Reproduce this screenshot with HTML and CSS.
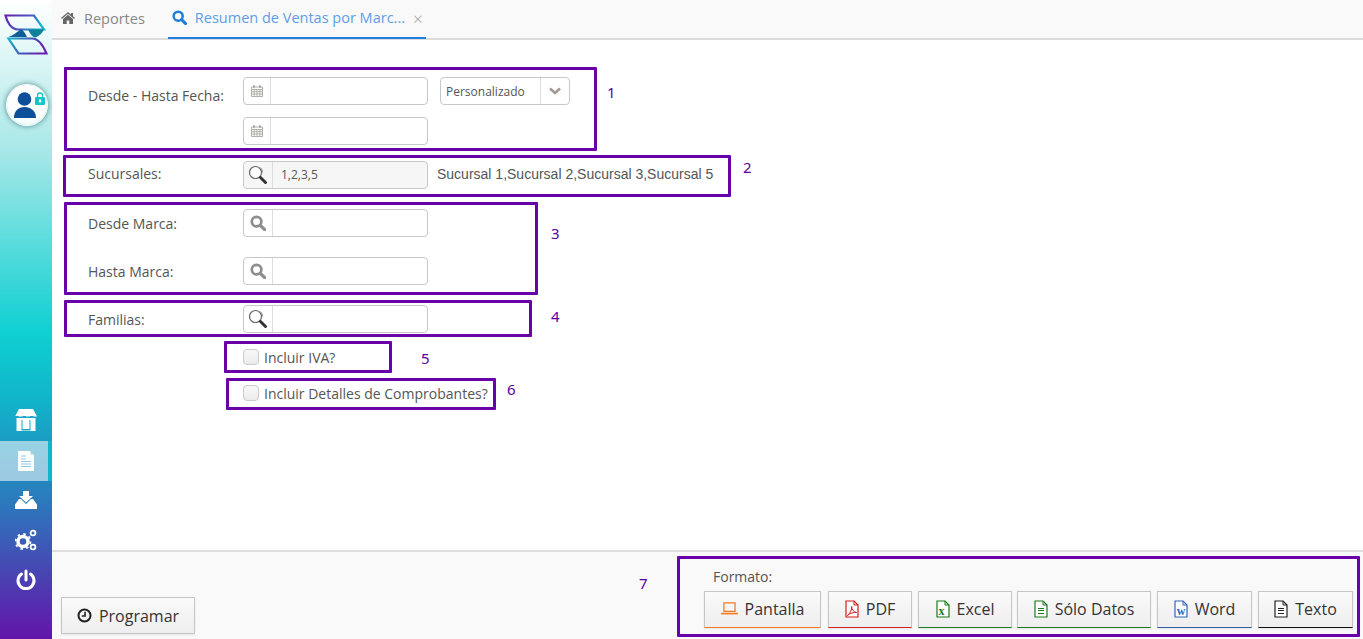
FILE: index.html
```html
<!DOCTYPE html>
<html lang="es">
<head>
<meta charset="utf-8">
<title>Resumen de Ventas por Marca</title>
<link rel="stylesheet" href="styles.css">
</head>
<body>
<svg class="defs" width="0" height="0" aria-hidden="true">
  <defs>
    <linearGradient id="lgTop" x1="0" y1="0" x2="1" y2="0.3"><stop offset="0" stop-color="#6a1fb0"/><stop offset=".6" stop-color="#4a55c0"/><stop offset="1" stop-color="#16b5c8"/></linearGradient>
    <linearGradient id="lgBot" x1="0" y1="0" x2="1" y2="0.3"><stop offset="0" stop-color="#16b5c8"/><stop offset=".5" stop-color="#3a62bd"/><stop offset="1" stop-color="#6a1fb0"/></linearGradient>
    <symbol id="i-cal" viewBox="0 0 14 14"><path fill="none" stroke="#b4b0a8" stroke-width="1" d="M1.500 3h11v9.500h-11zM1.500 5.500h11M1.500 7.700h11M1.500 10h11M4.200 5.500v7M7 5.500v7M9.800 5.500v7"/><path stroke="#a09c94" stroke-width="1.600" d="M4 1.200v2.600M10 1.200v2.600"/></symbol>
    <symbol id="i-search" viewBox="0 0 16 16"><circle cx="6.600" cy="6.600" r="4.800" fill="none" stroke="currentColor" stroke-width="2.700"/><path d="M10.300 10.300l4.200 4.200" stroke="currentColor" stroke-width="3.200" stroke-linecap="round"/></symbol>
    <symbol id="i-lookup" viewBox="0 0 20 20"><circle cx="7.500" cy="7.500" r="6" fill="#fff" stroke="#666" stroke-width="1.200"/><path fill="none" stroke="#999" stroke-width="1" d="M10 2.500a4 4 0 0 1 4.500 5"/><path d="M12.500 12.500l5 5" stroke="#333" stroke-width="3" stroke-linecap="round"/></symbol>
    <symbol id="i-file" viewBox="0 0 14 18"><path fill="#fff" stroke="currentColor" stroke-width="1.200" d="M1 1h8l4 4v12H1z"/><path fill="none" stroke="currentColor" stroke-width="1" d="M9 1v4h4"/></symbol>
  </defs>
</svg>

<aside class="sidebar">
  <svg class="logo" viewBox="0 0 48 42" width="48" height="42" aria-hidden="true">
    <path fill="none" stroke="url(#lgTop)" stroke-width="2.200" d="M5.500 1.500h28.500L44 15.500H18C11 15.500 7 8 5.500 1.500z"/>
    <path fill="#0f5f96" d="M8 23c5-1 9-5 13-8 4 3 5 6 6 8z"/>
    <path fill="#0f7f9a" d="M28 15.500h16c-2 4-6 7.500-9 8-3-1-5-4-7-8z"/>
    <path fill="none" stroke="url(#lgBot)" stroke-width="2.200" d="M8.500 24.500h24c7 0 11 8 14 15H18.500z"/>
  </svg>
  <div class="avatar">
    <svg viewBox="0 0 40 40" width="40" height="40" aria-hidden="true">
      <circle cx="17.500" cy="14" r="6.800" fill="#0d4f98"/>
      <path fill="#0d4f98" d="M7 33c0-7 4-11 10.500-11S29 26 29 33z"/>
      <path fill="none" stroke="#17c4c4" stroke-width="1.300" d="M30.500 12V10.500a2.500 2.500 0 0 1 5 0V12"/>
      <rect x="28" y="12" width="10" height="8" rx="1" fill="#17c4c4"/>
      <rect x="32" y="14.500" width="2.200" height="3" fill="#fff"/>
    </svg>
  </div>
  <nav class="side-nav">
    <a class="side-item">
      <svg viewBox="0 0 22 23" width="22" height="23" aria-hidden="true"><path fill="#fff" d="M4 0h14l4 7.500H0z"/><path fill="#fff" d="M1.500 9h19v13h-19z"/><path fill="#1aa3c4" d="M6.500 11h9v10.500h-9z"/><path fill="#fff" d="M7.500 11h7v9h-7z"/><path fill="#1aa3c4" d="M0 7h3.600a1.800 1.800 0 0 1-3.600 0zM7.400 7h3.600a1.800 1.800 0 0 1-3.600 0zM14.800 7h3.600a1.800 1.800 0 0 1-3.600 0z"/></svg>
    </a>
    <a class="side-item is-active">
      <svg viewBox="0 0 16 20" width="16" height="20" aria-hidden="true"><path fill="#fff" d="M0 0h12l4 4v16H0z"/><path fill="#a9d4e4" d="M12.500 0l3.500 3.500h-3.500z"/><path stroke="#8ecbe2" stroke-width="1.200" d="M3 5h5M3 8h5M3 10.500h10M3 13h10M3 15.500h10"/></svg>
    </a>
    <a class="side-item side-after">
      <svg viewBox="0 0 22 18" width="22" height="18" aria-hidden="true"><path fill="#fff" d="M8 0h6v5h4l-7 6.500L4 5h4z"/><path fill="#fff" d="M4 8h2l5 5 5-5h2l4 5.500V18H0v-4.500z"/></svg>
    </a>
    <a class="side-item">
      <svg viewBox="0 0 22 22" width="22" height="22" aria-hidden="true"><circle cx="8" cy="12.500" r="5" fill="none" stroke="#fff" stroke-width="3.500"/><circle cx="8" cy="12.500" r="7.500" fill="none" stroke="#fff" stroke-width="1.800" stroke-dasharray="2.500 3.400"/><circle cx="18" cy="4" r="2.400" fill="none" stroke="#fff" stroke-width="1.800"/><circle cx="18" cy="18" r="2.400" fill="none" stroke="#fff" stroke-width="1.800"/></svg>
    </a>
    <a class="side-item">
      <svg viewBox="0 0 20 22" width="20" height="22" aria-hidden="true"><path fill="none" stroke="#fff" stroke-width="3" stroke-linecap="round" d="M5.500 5a8 8 0 1 0 9 0"/><path stroke="#fff" stroke-width="3" stroke-linecap="round" d="M10 2v9"/></svg>
    </a>
  </nav>
</aside>

<main class="main">
  <header class="tabs">
    <a class="tab">
      <svg class="tab-icon" viewBox="0 0 14 12" width="14" height="12" aria-hidden="true"><path fill="#666" d="M7 0l3 2.600V1h2v3.300L14 6l-.8 1L7 1.800.8 7 0 6zM2 7l5-4.200L12 7v5H8.300V8.500H5.700V12H2z"/></svg>
      <span>Reportes</span>
    </a>
    <a class="tab is-active">
      <svg class="tab-icon" width="15" height="15" aria-hidden="true"><use href="#i-search"/></svg>
      <span>Resumen de Ventas por Marc...</span>
      <span class="tab-close">×</span>
    </a>
  </header>

  <form class="form">
    <div class="row row-date">
      <label class="row-label">Desde - Hasta Fecha:</label>
      <div class="field"><span class="addon"><svg width="14" height="14" aria-hidden="true"><use href="#i-cal"/></svg></span><span class="value"></span></div>
      <div class="select"><span class="select-text">Personalizado</span><span class="select-arrow"><svg viewBox="0 0 12 8" width="12" height="8" aria-hidden="true"><path fill="none" stroke="#a09a90" stroke-width="2.600" d="M1 1.500l5 4.500 5-4.500"/></svg></span></div>
    </div>
    <div class="row row-date2">
      <span class="row-label"></span>
      <div class="field"><span class="addon"><svg width="14" height="14" aria-hidden="true"><use href="#i-cal"/></svg></span><span class="value"></span></div>
    </div>
    <div class="row row-suc">
      <label class="row-label">Sucursales:</label>
      <div class="field is-filled"><span class="addon addon-w"><svg width="20" height="20" aria-hidden="true"><use href="#i-lookup"/></svg></span><span class="value">1,2,3,5</span></div>
      <span class="desc">Sucursal 1,Sucursal 2,Sucursal 3,Sucursal 5</span>
    </div>
    <div class="row row-std">
      <label class="row-label">Desde Marca:</label>
      <div class="field"><span class="addon addon-w"><svg class="grey-ic" width="16" height="16" aria-hidden="true"><use href="#i-search"/></svg></span><span class="value"></span></div>
    </div>
    <div class="row row-std">
      <label class="row-label">Hasta Marca:</label>
      <div class="field"><span class="addon addon-w"><svg class="grey-ic" width="16" height="16" aria-hidden="true"><use href="#i-search"/></svg></span><span class="value"></span></div>
    </div>
    <div class="row row-std">
      <label class="row-label">Familias:</label>
      <div class="field"><span class="addon addon-w"><svg width="20" height="20" aria-hidden="true"><use href="#i-lookup"/></svg></span><span class="value"></span></div>
    </div>
    <label class="check check-iva"><span class="box"></span>Incluir IVA?</label>
    <label class="check check-det"><span class="box"></span>Incluir Detalles de Comprobantes?</label>
  </form>

  <footer class="footer">
    <button class="btn btn-prog" type="button">
      <svg viewBox="0 0 14 14" width="15" height="15" aria-hidden="true"><circle cx="7" cy="7" r="5.600" fill="none" stroke="#222" stroke-width="1.900"/><path fill="none" stroke="#222" stroke-width="1.500" d="M7.500 3.500v4H4.500"/></svg>
      Programar
    </button>
    <div class="format">
      <div class="format-label">Formato:</div>
      <div class="format-btns">
        <button class="btn btn-pantalla" type="button"><svg viewBox="0 0 18 14" width="17" height="13" aria-hidden="true"><path fill="none" stroke="#f47a1f" stroke-width="1.300" d="M3 1h12v9H3z"/><path stroke="#f47a1f" stroke-width="1.800" d="M0 12.500h18"/></svg>Pantalla</button>
        <button class="btn btn-pdf" type="button"><span class="file-ic ic-red"><svg width="14" height="18" aria-hidden="true"><use href="#i-file"/></svg><svg class="pdf-mark" viewBox="0 0 10 10" width="10" height="10" aria-hidden="true"><path fill="none" stroke="#d91c1c" stroke-width="1" d="M0.500 9.500C3 7.500 5 3.500 4.700 0.500 4.500 3 6.500 6 9.500 6.500 7 6.200 3 7 .5 9.500z"/></svg></span><span>PDF</span></button>
        <button class="btn btn-excel" type="button"><span class="file-ic ic-green"><svg width="14" height="18" aria-hidden="true"><use href="#i-file"/></svg><b class="file-letter">x</b></span><span>Excel</span></button>
        <button class="btn btn-datos" type="button"><span class="file-ic ic-green"><svg width="14" height="18" aria-hidden="true"><use href="#i-file"/></svg><i class="file-lines"></i></span><span>Sólo Datos</span></button>
        <button class="btn btn-word" type="button"><span class="file-ic ic-blue"><svg width="14" height="18" aria-hidden="true"><use href="#i-file"/></svg><b class="file-letter">w</b></span><span>Word</span></button>
        <button class="btn btn-texto" type="button"><span class="file-ic ic-dark"><svg width="14" height="18" aria-hidden="true"><use href="#i-file"/></svg><i class="file-lines"></i></span><span>Texto</span></button>
      </div>
    </div>
  </footer>
</main>

<div class="note note-1"></div><span class="num num-1">1</span>
<div class="note note-2"></div><span class="num num-2">2</span>
<div class="note note-3"></div><span class="num num-3">3</span>
<div class="note note-4"></div><span class="num num-4">4</span>
<div class="note note-5"></div><span class="num num-5">5</span>
<div class="note note-6"></div><span class="num num-6">6</span>
<div class="note note-7"></div><span class="num num-7">7</span>
</body>
</html>
```
FILE: styles.css
```css
* { box-sizing: border-box; }
html, body { margin: 0; height: 100%; }
body {
  position: relative;
  display: flex;
  width: 1363px;
  height: 639px;
  overflow: hidden;
  background: #fff;
  color: #555;
  font-family: "Open Sans", sans-serif;
  font-size: 14px;
}
.defs { position: absolute; }

/* sidebar */
.sidebar {
  width: 52px;
  flex: none;
  display: flex;
  flex-direction: column;
  background: linear-gradient(180deg, #fff 0%, #a6e7e7 24%, #0fd0d2 52%, #10b6ca 62%, #2a7cbd 78%, #5b22ac 97%, #6215a8 100%);
}
.logo { margin: 14px 0 0 0; display: block; }
.avatar {
  width: 40px;
  height: 40px;
  margin: 29px 0 0 7px;
  border-radius: 50%;
  background: radial-gradient(circle at 50% 40%, #fff 55%, #d6f5f5 100%);
  box-shadow: 0 0 0 1px #fff, 0 0 5px 2px rgba(0,70,80,.45);
}
.avatar svg { display: block; }
.side-nav { margin-top: 276px; display: flex; flex-direction: column; }
.side-item {
  height: 40px;
  display: flex;
  align-items: center;
  justify-content: center;
}
.side-item:first-child { padding-bottom: 2px; }
.side-item.is-active {
  padding-left: 4px;
  background: rgba(255,255,255,.55);
  border-right: 4px solid #10b6ca;
}
.side-after { margin-top: -1px; }

/* main */
.main { flex: 1; display: flex; flex-direction: column; min-width: 0; }
.tabs {
  height: 40px;
  flex: none;
  display: flex;
  padding-left: 9px;
  gap: 23px;
  background: #f9f9f9;
  border-bottom: 2px solid #dcdcdc;
  font-size: 14.5px;
}
.tab {
  height: 39px;
  display: flex;
  align-items: center;
  gap: 9px;
  padding: 0 0 3px;
  color: #888;
}
.tab-icon { flex: none; }
.tab.is-active {
  color: #5c9fe6;
  padding: 0 3px 3px 4px;
  border-bottom: 2px solid #1f80e0;
  gap: 8px;
}
.tab.is-active .tab-icon { color: #1f7fd8; }
.tab-close { color: #999; font-size: 17px; line-height: 1; font-weight: 300; margin-top: 2px; }

/* form */
.form { flex: 1; padding: 37px 0 0 36px; display: flex; flex-direction: column; }
.row { display: flex; align-items: flex-start; height: 28px; }
.row-label { width: 155px; flex: none; color: #555; line-height: 28px; margin-top: 1px; }
.row-date .row-label { margin-top: 5px; }
.row-suc .row-label { margin-top: -1px; }
.row-date2 { margin-top: 12px; }
.row-suc { margin-top: 16px; }
.row-std { margin-top: 20px; }
.field {
  width: 185px;
  height: 28px;
  flex: none;
  display: flex;
  border: 1px solid #c8c8c8;
  border-radius: 4px;
  background: #fff;
}
.addon {
  width: 27px;
  flex: none;
  display: flex;
  align-items: center;
  justify-content: center;
  border-right: 1px solid #dcdcdc;
}
.addon-w { width: 29px; }
.grey-ic { color: #8e8e8e; }
.value { flex: 1; padding-left: 8px; font-size: 12px; line-height: 26px; color: #555; }
.is-filled { background: #f6f6f6; }
.select {
  width: 130px;
  height: 28px;
  margin-left: 12px;
  display: flex;
  align-items: center;
  border: 1px solid #c8c8c8;
  border-radius: 4px;
  font-size: 12px;
  color: #555;
}
.select-text { flex: 1; padding-left: 5px; }
.select-arrow {
  width: 29px;
  height: 26px;
  display: flex;
  align-items: center;
  justify-content: center;
  border-left: 1px solid #dcdcdc;
}
.desc {
  margin-left: 9px;
  line-height: 26px;
  font-family: "Liberation Sans", Arial, sans-serif;
  font-size: 14px;
  color: #555;
  white-space: nowrap;
}
.check { display: flex; align-items: center; gap: 5px; height: 20px; margin-left: 155px; color: #555; }
.check-iva { margin-top: 14px; }
.check-det { margin-top: 16px; }
.box {
  width: 16px;
  height: 16px;
  flex: none;
  border: 1px solid #ccc;
  border-radius: 4px;
  background: linear-gradient(#f7f7f7, #ececec);
}

/* footer */
.footer {
  height: 89px;
  flex: none;
  display: flex;
  justify-content: space-between;
  align-items: flex-end;
  padding: 0 10px 5px 9px;
  background: #f9f9f9;
  border-top: 2px solid #dedede;
}
.btn {
  height: 37px;
  display: inline-flex;
  align-items: center;
  justify-content: center;
  gap: 6px;
  padding: 0;
  border: 1px solid #c6c6c6;
  background: linear-gradient(#fafafa, #eeeeee);
  color: #333;
  font-family: "Open Sans", sans-serif;
  font-size: 16px;
  box-shadow: 0 1px 2px rgba(0,0,0,.08);
}
.btn-prog { width: 134px; gap: 7px; }
.format { margin-bottom: 6px; }
.format-label { margin: 0 0 5px 9px; color: #555; line-height: 19px; }
.format-btns { display: flex; }
.format-btns .btn { border-bottom-width: 1px; padding-bottom: 2px; gap: 7px; }
.btn-pantalla { width: 117px; border-bottom-color: #f47a1f; }
.btn-pdf { width: 84px; margin-left: 7px; border-bottom-color: #d91c1c; }
.btn-excel { width: 94px; margin-left: 6px; border-bottom-color: #1b7a1b; }
.btn-datos { width: 134px; margin-left: 5px; border-bottom-color: #1b7a1b; }
.btn-word { width: 95px; margin-left: 6px; border-bottom-color: #2b5fa8; }
.btn-texto { width: 95px; margin-left: 6px; border-bottom-color: #111; }
.ic-red { color: #d91c1c; }
.ic-green { color: #1b7a1b; }
.ic-blue { color: #2f66b8; }
.ic-dark { color: #222; }
.file-ic { position: relative; display: inline-flex; width: 14px; height: 18px; }
.pdf-mark { position: absolute; left: 2px; top: 6px; }
.file-letter {
  position: absolute;
  left: 3px;
  top: 5px;
  font: bold 12px/12px "Liberation Serif", serif;
  color: inherit;
}
.file-lines {
  position: absolute;
  left: 4px;
  top: 8px;
  width: 6px;
  height: 6px;
  border-top: 1px solid currentColor;
  border-bottom: 1px solid currentColor;
  background: linear-gradient(currentColor, currentColor) center / 100% 1px no-repeat;
}

/* annotations drawn over the screen */
.note { position: absolute; border: 3px solid #6a00a8; border-radius: 1px; pointer-events: none; }
.note-1 { left: 64px; top: 67px; width: 533px; height: 84px; }
.note-2 { left: 63px; top: 155px; width: 668px; height: 42px; }
.note-3 { left: 64px; top: 202px; width: 474px; height: 93px; }
.note-4 { left: 64px; top: 300px; width: 468px; height: 37px; }
.note-5 { left: 224px; top: 341px; width: 168px; height: 32px; }
.note-6 { left: 226px; top: 378px; width: 270px; height: 32px; }
.note-7 { left: 677px; top: 556px; width: 683px; height: 81px; }
.num {
  position: absolute;
  color: #5a00a0;
  font-family: "Noto Sans", sans-serif;
  font-size: 15px;
  line-height: 16px;
}
.num-1 { left: 607px; top: 84px; }
.num-2 { left: 743px; top: 159px; }
.num-3 { left: 551px; top: 225px; }
.num-4 { left: 551px; top: 308px; }
.num-5 { left: 421px; top: 350px; }
.num-6 { left: 507px; top: 381px; }
.num-7 { left: 639px; top: 575px; }
```
